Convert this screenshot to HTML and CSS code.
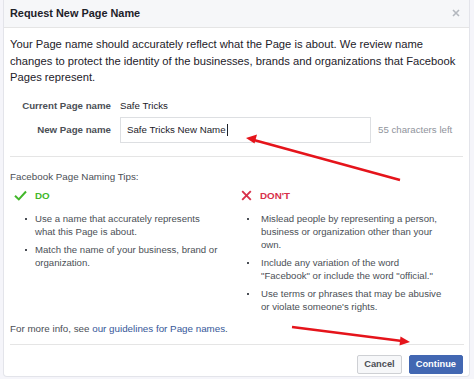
FILE: index.html
```html
<!DOCTYPE html>
<html>
<head>
<meta charset="utf-8">
<link rel="stylesheet" href="styles.css">
</head>
<body>
<div class="dialog">
  <div class="header">
    <span class="title">Request New Page Name</span>
    <svg class="close" viewBox="0 0 8 8" width="8" height="8"><path d="M1 1 L7 7 M7 1 L1 7" stroke="#b4b8bf" stroke-width="1.6" fill="none"/></svg>
  </div>
  <div class="content">
    <p class="intro">Your Page name should accurately reflect what the Page is about. We review name changes to protect the identity of the businesses, brands and organizations that Facebook Pages represent.</p>
    <div class="form">
      <div class="label">Current Page name</div>
      <div class="value">Safe Tricks</div>
      <div class="label">New Page name</div>
      <div class="field-row">
        <div class="input">Safe Tricks New Name<span class="caret"></span></div>
        <span class="count">55 characters left</span>
      </div>
    </div>
    <div class="divider"></div>
    <div class="tips-title">Facebook Page Naming Tips:</div>
    <div class="tips">
      <div class="col">
        <div class="col-head do">
          <svg class="ico" viewBox="0 0 13 11" width="13" height="11"><path d="M1 5.8 L4.8 9.4 L12 1.5" fill="none" stroke="#42b72a" stroke-width="2"/></svg>
          <span>DO</span>
        </div>
        <ul>
          <li>Use a name that accurately represents what this Page is about.</li>
          <li>Match the name of your business, brand or organization.</li>
        </ul>
      </div>
      <div class="col">
        <div class="col-head dont">
          <svg class="ico" viewBox="0 0 11 11" width="11" height="11"><path d="M1.2 1.2 L9.8 9.8 M9.8 1.2 L1.2 9.8" fill="none" stroke="#d8304a" stroke-width="1.9"/></svg>
          <span>DON'T</span>
        </div>
        <ul>
          <li>Mislead people by representing a person, business or organization other than your own.</li>
          <li>Include any variation of the word "Facebook" or include the word "official."</li>
          <li>Use terms or phrases that may be abusive or violate someone's rights.</li>
        </ul>
      </div>
    </div>
    <p class="more">For more info, see <a href="#">our guidelines for Page names</a>.</p>
  </div>
  <div class="footer">
    <button class="btn cancel">Cancel</button>
    <button class="btn continue">Continue</button>
  </div>
  <svg class="arrows" width="474" height="379" viewBox="0 0 474 379">
    <line x1="400" y1="180" x2="252" y2="139.5" stroke="#e5141b" stroke-width="2.6"/>
    <path d="M246 138 L257 134.5 L254.5 143.5 Z" fill="#e5141b"/>
    <line x1="292" y1="327" x2="402" y2="341" stroke="#e5141b" stroke-width="2.6"/>
    <path d="M410 342 L400.5 336.5 L399.5 345.5 Z" fill="#e5141b"/>
  </svg>
</div>
</body>
</html>
```

FILE: styles.css
```css
html, body {
  margin: 0;
  padding: 0;
}
body {
  background: #f5f5fa;
  width: 474px;
  height: 379px;
  overflow: hidden;
  font-family: "Liberation Sans", Arial, sans-serif;
  color: #1d2129;
}
.dialog {
  position: relative;
  margin: 0 4px 0 3px;
  background: #fff;
  border: 1px solid #e3e4ea;
  border-top: none;
  border-radius: 0 0 4px 4px;
  box-sizing: border-box;
}
.header {
  height: 28px;
  background: #f6f7f9;
  border-bottom: 1px solid #e5e5e5;
  display: flex;
  align-items: center;
  justify-content: space-between;
  padding: 0 9px 1px 6px;
  box-sizing: border-box;
}
.title {
  font-weight: bold;
  font-size: 10.9px;
  color: #1d2129;
}
.content {
  padding: 0 6px;
}
.intro {
  margin: 8px 0 0 0;
  font-size: 11.2px;
  line-height: 16.5px;
  color: #1d2129;
}
.form {
  display: grid;
  grid-template-columns: 101px 1fr;
  column-gap: 9px;
  row-gap: 4px;
  align-items: center;
  margin-top: 13px;
  font-size: 9.7px;
}
.label {
  text-align: right;
  font-weight: bold;
  color: #4b4f56;
  line-height: 14px;
}
.value {
  color: #1d2129;
  line-height: 14px;
}
.field-row {
  display: flex;
  align-items: center;
  gap: 7px;
}
.input {
  width: 251px;
  height: 26px;
  box-sizing: border-box;
  border: 1px solid #dddfe2;
  padding: 0 6px;
  display: flex;
  align-items: center;
  color: #1d2129;
}
.caret {
  display: inline-block;
  width: 1px;
  height: 12px;
  background: #1d2129;
  margin-left: 1px;
}
.count {
  color: #90949c;
}
.divider {
  height: 1px;
  background: #e5e5e5;
  margin-top: 13px;
}
.tips-title {
  margin-top: 13px;
  font-size: 9.8px;
  line-height: 13px;
  color: #4b4f56;
}
.tips {
  display: grid;
  grid-template-columns: 231px 1fr;
  margin-top: 6px;
}
.col-head {
  display: flex;
  align-items: center;
  font-weight: bold;
  font-size: 9.8px;
  height: 14px;
}
.do { color: #42b72a; }
.do .ico { margin-left: 4px; }
.do span { margin-left: 8px; }
.dont { color: #d8304a; }
.dont .ico { margin-left: 0; }
.dont span { margin-left: 8px; }
ul {
  list-style: none;
  margin: 9px 0 0 0;
  padding: 0 0 0 25px;
  width: 185px;
  font-size: 9.6px;
  line-height: 13px;
  color: #4b4f56;
}
.dont + ul { padding-left: 20px; }
li {
  position: relative;
  margin-bottom: 5px;
}
li:last-child {
  margin-bottom: 0;
}
li::before {
  content: "";
  position: absolute;
  left: -10px;
  top: 6px;
  width: 2px;
  height: 2px;
  background: #4b4f56;
}
.dont + ul li::before {
  left: -14px;
}
.more {
  margin: 9px 0 0 0;
  font-size: 9.8px;
  line-height: 13px;
  color: #4b4f56;
}
.more a {
  color: #365899;
  text-decoration: none;
}
.footer {
  margin: 9px 5px 0 6px;
  border-top: 1px solid #e5e5e5;
  display: flex;
  justify-content: flex-end;
  gap: 7px;
  padding: 10px 1px 2px 0;
}
.btn {
  height: 19px;
  font-family: "Liberation Sans", Arial, sans-serif;
  font-size: 9.3px;
  font-weight: bold;
  padding: 0 6px;
  border-radius: 2px;
  cursor: pointer;
}
.cancel {
  background: #f6f7f9;
  border: 1px solid #ced0d4;
  color: #4b4f56;
}
.continue {
  background: #4267b2;
  border: 1px solid #4267b2;
  color: #fff;
}
.arrows {
  position: absolute;
  left: -4px;
  top: 0;
  pointer-events: none;
}
```
